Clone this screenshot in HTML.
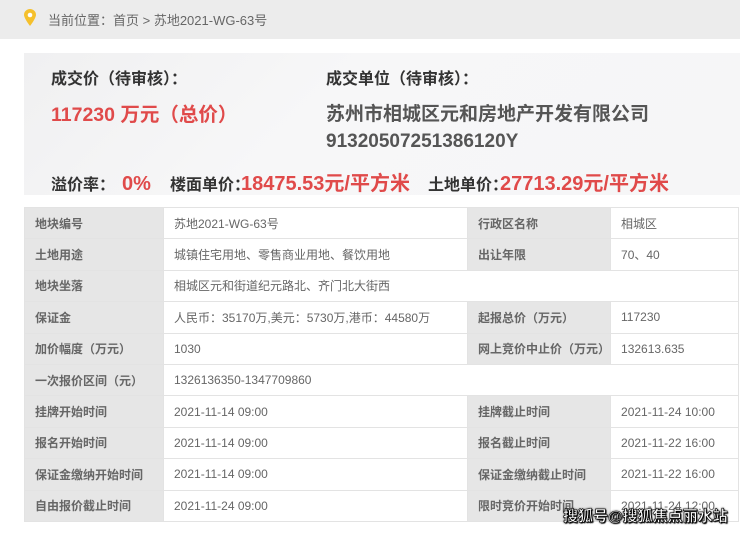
<!DOCTYPE html>
<html><head><meta charset="utf-8"><style>
*{margin:0;padding:0;box-sizing:border-box}
body{width:740px;height:533px;overflow:hidden;background:#fff;font-family:"Liberation Sans","Noto Sans CJK SC",sans-serif;position:relative}
.top{position:absolute;left:0;top:0;width:740px;height:39px;background:#ececec}
.crumb{position:absolute;left:48px;top:10px;font-size:13px;color:#666}
.pin{position:absolute;left:24px;top:9px}
.panel{position:absolute;left:24px;top:53px;width:716px;height:142px;background:linear-gradient(135deg,#f0f0f1 0%,#f7f7f8 40%,#f6f6f7 100%)}
.t{position:absolute;white-space:nowrap;font-weight:bold;line-height:1.2}
.lbl{font-size:16px;color:#333}
.red{color:#e04a4a}
.big{font-size:20px}
.co{font-size:19px;color:#555}
.row{position:absolute;left:0;top:168px;width:740px;height:28px;font-weight:bold;white-space:nowrap}
.row span{position:absolute;bottom:2px;line-height:1}
table{position:absolute;left:24px;top:207px;border-collapse:collapse;width:715px;font-size:12px;color:#666}
td{border:1px solid #e3e3e3;height:31.4px;padding-left:10px;white-space:nowrap}
td.l{background:#e6e6e6;font-weight:bold;color:#666}
.wm{position:absolute;left:563px;top:505px;font-size:15px;font-weight:bold;color:#fff;-webkit-text-stroke:0.6px #000;text-shadow:0 0 2px #000,1px 1px 1px #000}
</style></head><body>
<div class="top"></div>
<svg class="pin" width="12" height="18" viewBox="0 0 12 18"><path d="M6 0C2.7 0 0 2.6 0 5.8 0 9.5 6 17 6 17s6-7.5 6-11.2C12 2.6 9.3 0 6 0z" fill="#f5c02c"/><circle cx="6" cy="6" r="2.3" fill="#fff"/></svg>
<div class="crumb">当前位置：首页 &gt; 苏地2021-WG-63号</div>
<div class="panel"></div>
<div class="t lbl" style="left:51px;top:70px">成交价（待审核）：</div>
<div class="t red big" style="left:51px;top:104px;font-size:19.5px">117230 万元（总价）</div>
<div class="t lbl" style="left:326px;top:70px">成交单位（待审核）：</div>
<div class="t co" style="left:326px;top:104px">苏州市相城区元和房地产开发有限公司</div>
<div class="t co" style="left:326px;top:131px">91320507251386120Y</div>
<div class="row">
<span class="lbl" style="left:51px;font-size:16px;color:#333">溢价率：</span>
<span class="red" style="left:122px;font-size:20px">0%</span>
<span style="left:170px;font-size:16px;color:#333">楼面单价：</span>
<span class="red" style="left:241px;font-size:20px">18475.53元/平方米</span>
<span style="left:428px;font-size:16px;color:#333">土地单价：</span>
<span class="red" style="left:500px;font-size:20px">27713.29元/平方米</span>
</div>
<table>
<colgroup><col style="width:139px"><col style="width:304px"><col style="width:139px"><col></colgroup>
<tr><td class="l">地块编号</td><td>苏地2021-WG-63号</td><td class="l">行政区名称</td><td>相城区</td></tr>
<tr><td class="l">土地用途</td><td>城镇住宅用地、零售商业用地、餐饮用地</td><td class="l">出让年限</td><td>70、40</td></tr>
<tr><td class="l">地块坐落</td><td colspan="3">相城区元和街道纪元路北、齐门北大街西</td></tr>
<tr><td class="l">保证金</td><td>人民币：35170万,美元：5730万,港币：44580万</td><td class="l">起报总价（万元）</td><td>117230</td></tr>
<tr><td class="l">加价幅度（万元）</td><td>1030</td><td class="l">网上竞价中止价（万元）</td><td>132613.635</td></tr>
<tr><td class="l">一次报价区间（元）</td><td colspan="3">1326136350-1347709860</td></tr>
<tr><td class="l">挂牌开始时间</td><td>2021-11-14 09:00</td><td class="l">挂牌截止时间</td><td>2021-11-24 10:00</td></tr>
<tr><td class="l">报名开始时间</td><td>2021-11-14 09:00</td><td class="l">报名截止时间</td><td>2021-11-22 16:00</td></tr>
<tr><td class="l">保证金缴纳开始时间</td><td>2021-11-14 09:00</td><td class="l">保证金缴纳截止时间</td><td>2021-11-22 16:00</td></tr>
<tr><td class="l">自由报价截止时间</td><td>2021-11-24 09:00</td><td class="l">限时竞价开始时间</td><td>2021-11-24 12:00</td></tr>
</table>
<div class="wm">搜狐号@搜狐焦点丽水站</div>
</body></html>
